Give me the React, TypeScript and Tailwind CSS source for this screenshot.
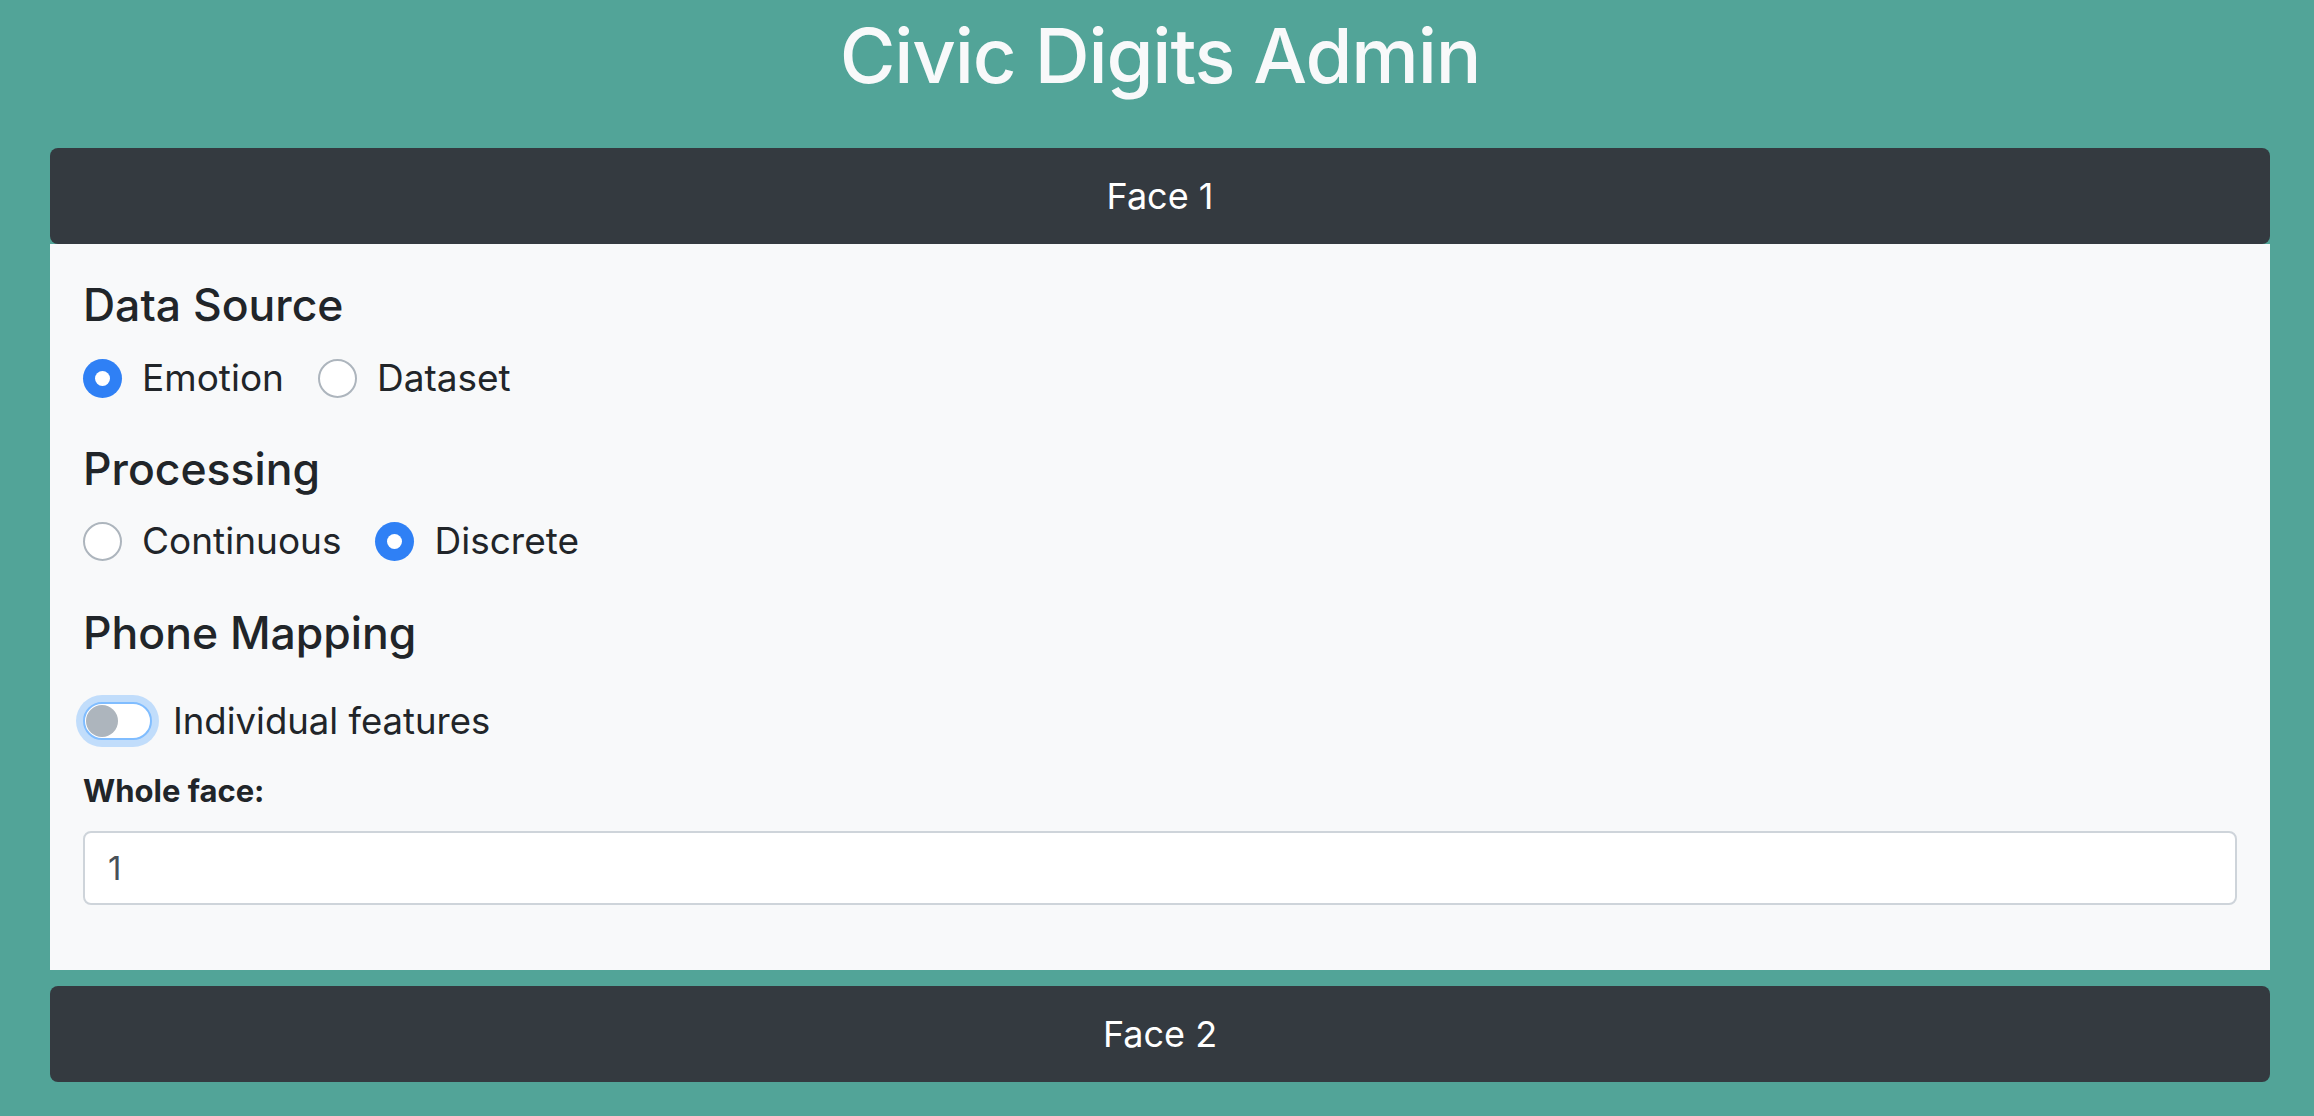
import React from "react";

const Radio = ({ checked, label }: { checked: boolean; label: string }) => (
  <div className="flex items-center h-[46px] mr-[34px]">
    {checked ? (
      <span className="shrink-0 w-[39px] h-[39px] rounded-full bg-[#2f80f5] flex items-center justify-center">
        <span className="w-[15px] h-[15px] rounded-full bg-white" />
      </span>
    ) : (
      <span className="shrink-0 w-[39px] h-[39px] rounded-full bg-white border-2 border-[#adb5bd]" />
    )}
    <span className="ml-[20px] text-[37px] leading-[46px] text-[#212529]">{label}</span>
  </div>
);

const Heading = ({ children, className = "" }: { children: React.ReactNode; className?: string }) => (
  <h4 className={"text-[44.5px] leading-[52px] font-medium text-[#212529] " + className}>{children}</h4>
);

export default function App() {
  return (
    <div className="min-h-screen bg-[#52a498] font-['Inter',sans-serif]">
      <div className="ml-[50px] w-[2220px]">
        <h1 className="pt-[9px] mb-[47px] text-center text-[76px] leading-[92px] font-medium tracking-[-0.015em] text-[#f8f9fa]">
          Civic Digits Admin
        </h1>

        <div className="h-[96px] rounded-[8px] bg-[#343a40] flex items-center justify-center">
          <span className="text-[36px] leading-[36px] text-white">Face 1</span>
        </div>

        <div className="bg-[#f8f9fa] px-[33px] pt-[35px] pb-[65px]">
          <Heading>Data Source</Heading>
          <div className="flex mt-[24px]">
            <Radio checked label="Emotion" />
            <Radio checked={false} label="Dataset" />
          </div>

          <Heading className="mt-[42px]">Processing</Heading>
          <div className="flex mt-[23px]">
            <Radio checked={false} label="Continuous" />
            <Radio checked label="Discrete" />
          </div>

          <Heading className="mt-[43px]">Phone Mapping</Heading>
          <div className="flex items-center h-[46px] mt-[39px]">
            <span className="shrink-0 relative w-[69px] h-[38px] rounded-full bg-white border-2 border-[#80bdff] shadow-[0_0_0_7px_rgba(0,123,255,0.22)]">
              <span className="absolute left-[1px] top-[1px] w-[32px] h-[32px] rounded-full bg-[#adb5bd]" />
            </span>
            <span className="ml-[21px] text-[36.5px] leading-[46px] text-[#212529]">Individual features</span>
          </div>

          <div className="mt-[27px] text-[31px] leading-[40px] font-bold text-[#212529]">Whole face:</div>

          <div className="mt-[20px] h-[74px] rounded-[8px] bg-white border-2 border-[#ced4da] flex items-center pl-[23px]">
            <span className="text-[33px] leading-[40px] text-[#495057]">1</span>
          </div>
        </div>

        <div className="mt-[16px] h-[96px] rounded-[8px] bg-[#343a40] flex items-center justify-center">
          <span className="text-[36px] leading-[36px] text-white">Face 2</span>
        </div>
      </div>
    </div>
  );
}
